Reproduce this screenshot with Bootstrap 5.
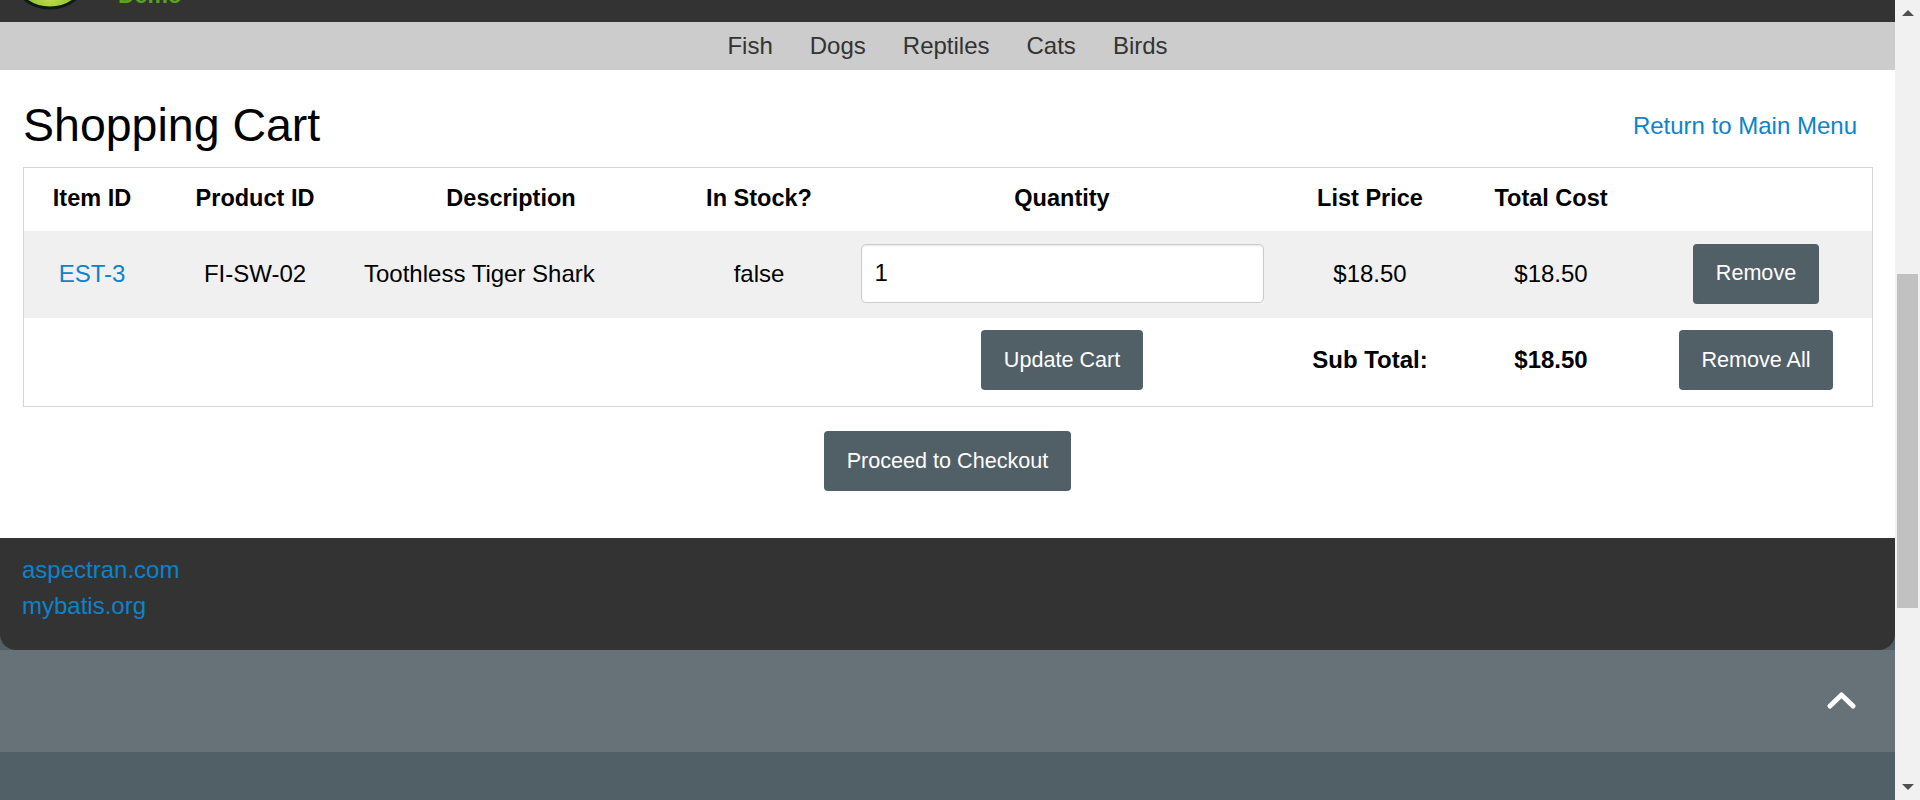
<!DOCTYPE html>
<html>
<head>
    <meta charset="utf-8" />
    <title>Shopping Cart</title>
    <link href="https://cdn.jsdelivr.net/npm/bootstrap@5.3.2/dist/css/bootstrap.min.css" rel="stylesheet">
    <style>
        html, body {
            height: 800px;
            overflow: hidden;
        }

        body {
            font-family: "Liberation Sans", Arial, sans-serif;
            font-size: 24px;
            color: #000;
            background-color: #515f67;
        }

        a {
            color: #0a84cc;
            text-decoration: none;
        }

        .page-wrap {
            height: 800px;
        }

        .page-main {
            flex: 1 1 auto;
            min-width: 0;
        }

        .top-bar {
            height: 22px;
            background-color: #333;
            overflow: hidden;
        }

        .logo-mark {
            flex: none;
            margin-left: 7px;
            margin-bottom: 12px;
        }

        .logo-name {
            flex: none;
            margin-left: 25px;
            margin-bottom: 15px;
            line-height: 24px;
            color: #5aa41c;
            font-size: 23px;
            font-weight: 700;
        }

        .sub-nav {
            height: 48px;
            background-color: #ccc;
            gap: 37px;
        }

        .sub-nav a {
            color: #333;
        }

        .content-area {
            height: 468px;
            background-color: #fff;
            padding: 15px 23px 0;
        }

        .cart-head {
            height: 82px;
        }

        .cart-head h2 {
            font-size: 46.5px;
            font-weight: 400;
            margin: 0;
        }

        .cart-head a {
            margin-right: 15px;
        }

        .cart-table {
            width: 1850px;
            table-layout: fixed;
            border: 1px solid #d5d5d5;
            border-collapse: separate;
            border-spacing: 0;
        }

        .cart-table th,
        .cart-table td {
            padding: 0 0 2px;
            text-align: center;
            vertical-align: middle;
            font-size: 24px;
        }

        .cart-table th {
            height: 63px;
            font-size: 23.5px;
            font-weight: 700;
        }

        .cart-table th:nth-child(1) { width: 136px; }
        .cart-table th:nth-child(2) { width: 190px; }
        .cart-table th:nth-child(3) { width: 322px; }
        .cart-table th:nth-child(4) { width: 174px; }
        .cart-table th:nth-child(5) { width: 432px; }
        .cart-table th:nth-child(6) { width: 184px; }
        .cart-table th:nth-child(7) { width: 178px; }
        .cart-table th:nth-child(8) { width: 232px; }

        .cart-table .row-item td {
            height: 87px;
            background-color: #f0f0f0;
        }

        .cart-table .row-total td {
            height: 88px;
            padding-bottom: 4px;
        }

        .cart-table .text-desc {
            text-align: left;
            padding-left: 14px;
        }

        .btn-slate {
            background-color: #515f67;
            border: 0;
            border-radius: 4px;
            color: #fff;
            font-size: 21.6px;
            height: 60px;
            padding: 0 22.5px;
        }

        .qty-input {
            display: block;
            width: 403px;
            height: 59px;
            margin: 0 auto;
            padding: 0 13px 2px;
            border: 1px solid #ccc;
            border-radius: 5px;
            box-shadow: inset 0 1px 2px rgba(0, 0, 0, 0.1);
            color: #000;
            font-size: 24px;
        }

        .checkout-row {
            margin-top: 24px;
        }

        .site-footer {
            height: 112px;
            background-color: #333;
            border-radius: 0 0 16px 16px;
            padding: 14px 22px;
            line-height: 36px;
        }

        .up-band {
            height: 102px;
            background-color: #677178;
            padding: 0 38px 3px 0;
        }

        .bottom-band {
            height: 48px;
            background-color: #515f67;
        }

        .fake-scroll {
            flex: 0 0 25px;
            background-color: #f1f1f1;
            padding: 0 2px;
        }

        .scroll-arrow {
            flex: 0 0 26px;
            margin: 0 auto;
        }

        .scroll-track {
            flex: 1 1 auto;
        }

        .scroll-thumb {
            height: 334px;
            margin-top: 248px;
            background-color: #c1c1c1;
        }
    </style>
</head>
<body>
    <div class="page-wrap d-flex">
        <div class="page-main d-flex flex-column">
            <div class="top-bar d-flex align-items-end">
                <svg class="logo-mark" width="86" height="86" viewBox="0 0 86 86">
                    <defs>
                        <radialGradient id="logoFill" cx="0.5" cy="0.85" r="0.5">
                            <stop offset="0" stop-color="#c3e04a" />
                            <stop offset="1" stop-color="#6fa81e" />
                        </radialGradient>
                    </defs>
                    <circle cx="43" cy="43" r="41" fill="url(#logoFill)" stroke="#0b1c18" stroke-width="3" />
                </svg>
                <span class="logo-name">Demo</span>
            </div>
            <nav class="sub-nav d-flex justify-content-center align-items-center">
                <a href="#">Fish</a>
                <a href="#">Dogs</a>
                <a href="#">Reptiles</a>
                <a href="#">Cats</a>
                <a href="#">Birds</a>
            </nav>
            <div class="content-area">
                <div class="cart-head d-flex justify-content-between align-items-center">
                    <h2>Shopping Cart</h2>
                    <a href="#">Return to Main Menu</a>
                </div>
                <table class="cart-table">
                    <tr>
                        <th>Item ID</th>
                        <th>Product ID</th>
                        <th>Description</th>
                        <th>In Stock?</th>
                        <th>Quantity</th>
                        <th>List Price</th>
                        <th>Total Cost</th>
                        <th></th>
                    </tr>
                    <tr class="row-item">
                        <td><a href="#">EST-3</a></td>
                        <td>FI-SW-02</td>
                        <td class="text-desc">Toothless Tiger Shark</td>
                        <td>false</td>
                        <td><input class="qty-input" type="text" value="1"></td>
                        <td>$18.50</td>
                        <td>$18.50</td>
                        <td><button class="btn-slate" type="button">Remove</button></td>
                    </tr>
                    <tr class="row-total">
                        <td colspan="4"></td>
                        <td><button class="btn-slate" type="button">Update Cart</button></td>
                        <td class="fw-bold">Sub Total:</td>
                        <td class="fw-bold">$18.50</td>
                        <td><button class="btn-slate" type="button">Remove All</button></td>
                    </tr>
                </table>
                <div class="checkout-row text-center">
                    <button class="btn-slate" type="button">Proceed to Checkout</button>
                </div>
            </div>
            <footer class="site-footer">
                <a class="d-block" href="#">aspectran.com</a>
                <a class="d-block" href="#">mybatis.org</a>
            </footer>
            <div class="up-band d-flex justify-content-end align-items-center">
                <svg width="30" height="18" viewBox="0 0 30 18">
                    <path d="M3 15 L14.5 4 L26 15" fill="none" stroke="#fff" stroke-width="5" stroke-linecap="round" stroke-linejoin="round" />
                </svg>
            </div>
            <div class="bottom-band"></div>
        </div>
        <div class="fake-scroll d-flex flex-column">
            <svg class="scroll-arrow" width="12" height="26" viewBox="0 0 12 26">
                <path d="M0 16 L6 10 L12 16 Z" fill="#505050" />
            </svg>
            <div class="scroll-track">
                <div class="scroll-thumb"></div>
            </div>
            <svg class="scroll-arrow" width="12" height="26" viewBox="0 0 12 26">
                <path d="M0 10 L12 10 L6 16 Z" fill="#505050" />
            </svg>
        </div>
    </div>
    <script src="https://cdn.jsdelivr.net/npm/bootstrap@5.3.2/dist/js/bootstrap.bundle.min.js"></script>
</body>
</html>
